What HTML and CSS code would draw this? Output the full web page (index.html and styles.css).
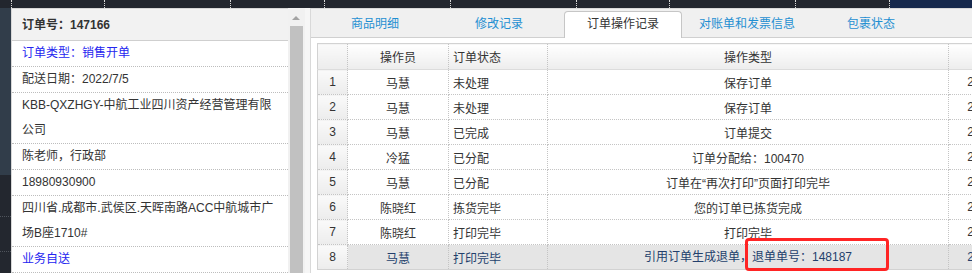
FILE: index.html
```html
<!DOCTYPE html>
<html lang="zh-CN">
<head>
    <meta charset="UTF-8">
    <meta name="viewport" content="width=device-width, initial-scale=1.0">
    <title>订单操作记录</title>
    <link rel="stylesheet" href="styles.css">
</head>
<body>
    <div class="topbar">
        <span class="seg seg-first"></span>
        <span class="seg seg-s"></span>
        <span class="seg seg-l"></span>
        <span class="seg seg-m"></span>
        <span class="seg seg-l"></span>
        <span class="seg seg-l"></span>
        <span class="seg seg-s"></span>
        <span class="seg seg-l"></span>
        <span class="seg seg-m"></span>
        <span class="seg-rest"></span>
    </div>

    <div class="main">
        <div class="nav-edge">
            <div class="nav-block"></div>
            <div class="nav-item"></div>
            <div class="nav-item short"></div>
        </div>

        <div class="order-panel">
            <div class="order-head">订单号：147166</div>
            <ul class="order-info">
                <li class="link">订单类型：销售开单</li>
                <li>配送日期：2022/7/5</li>
                <li>KBB-QXZHGY-中航工业四川资产经营管理有限公司</li>
                <li>陈老师，行政部</li>
                <li>18980930900</li>
                <li>四川省.成都市.武侯区.天晖南路ACC中航城市广场B座1710#</li>
                <li class="link">业务自送</li>
            </ul>
        </div>

        <div class="scrollbar">
            <span class="arrow"></span>
            <span class="thumb"></span>
        </div>
        <div class="splitter"></div>

        <div class="detail">
            <div class="tabs">
                <span class="tab">商品明细</span>
                <span class="tab">修改记录</span>
                <span class="tab active">订单操作记录</span>
                <span class="tab">对账单和发票信息</span>
                <span class="tab">包裹状态</span>
            </div>

            <div class="grid-wrap">
                <table class="grid">
                    <colgroup>
                        <col class="c-no">
                        <col class="c-user">
                        <col class="c-state">
                        <col class="c-type">
                        <col class="c-time">
                    </colgroup>
                    <thead>
                        <tr>
                            <th class="no"></th>
                            <th>操作员</th>
                            <th class="left">订单状态</th>
                            <th>操作类型</th>
                            <th>操作时间</th>
                        </tr>
                    </thead>
                    <tbody>
                        <tr>
                            <td class="no">1</td>
                            <td>马慧</td>
                            <td class="left">未处理</td>
                            <td>保存订单</td>
                            <td>2022-07-05 09:12:26</td>
                        </tr>
                        <tr>
                            <td class="no">2</td>
                            <td>马慧</td>
                            <td class="left">未处理</td>
                            <td>保存订单</td>
                            <td>2022-07-05 09:13:02</td>
                        </tr>
                        <tr>
                            <td class="no">3</td>
                            <td>马慧</td>
                            <td class="left">已完成</td>
                            <td>订单提交</td>
                            <td>2022-07-05 09:13:05</td>
                        </tr>
                        <tr>
                            <td class="no">4</td>
                            <td>冷猛</td>
                            <td class="left">已分配</td>
                            <td>订单分配给：100470</td>
                            <td>2022-07-05 09:40:18</td>
                        </tr>
                        <tr>
                            <td class="no">5</td>
                            <td>马慧</td>
                            <td class="left">已分配</td>
                            <td>订单在“再次打印”页面打印完毕</td>
                            <td>2022-07-05 10:02:47</td>
                        </tr>
                        <tr>
                            <td class="no">6</td>
                            <td>陈晓红</td>
                            <td class="left">拣货完毕</td>
                            <td>您的订单已拣货完成</td>
                            <td>2022-07-05 10:25:31</td>
                        </tr>
                        <tr>
                            <td class="no">7</td>
                            <td>陈晓红</td>
                            <td class="left">打印完毕</td>
                            <td>打印完毕</td>
                            <td>2022-07-05 10:26:09</td>
                        </tr>
                        <tr class="selected">
                            <td class="no">8</td>
                            <td>马慧</td>
                            <td class="left">打印完毕</td>
                            <td>引用订单生成退单，<span class="mark">退单单号：148187</span></td>
                            <td>2022-07-06 14:08:52</td>
                        </tr>
                    </tbody>
                </table>
            </div>
        </div>
    </div>
</body>
</html>
```

FILE: styles.css
```css
:root {
    --text-color: #333;
    --link-color: #2525f0;
    --tab-color: #1f8fd2;
    --line-color: #d2d2d2;
    --dot-color: #c4c4c4;
}
* {
    box-sizing: border-box;
}
body {
    margin: 0;
    width: 972px;
    height: 273px;
    overflow: hidden;
    background-color: #23272f;
    font-family: "Liberation Sans", "Noto Sans CJK SC", sans-serif;
    font-size: 12px;
    color: var(--text-color);
}

/* dark strip on top */
.topbar {
    display: flex;
    height: 8px;
    background-color: #22262e;
}
.seg {
    height: 8px;
    border-right: 1px dotted #d8d8d8;
}
.seg-first { width: 12px; }
.seg-s { width: 93px; }
.seg-m { width: 94px; }
.seg-l { width: 126px; }
.seg-rest {
    flex: 1;
    background-color: #16284c;
}

.main {
    display: flex;
    height: 265px;
}

/* left navigation edge */
.nav-edge {
    width: 11px;
    background-color: #23272f;
}
.nav-block {
    height: 167px;
    background-color: #313d4a;
}
.nav-item {
    height: 42px;
    border-bottom: 1px dotted #4f545c;
}
.nav-item.short {
    height: 35px;
}

/* order summary */
.order-panel {
    width: 277px;
    background-color: white;
    border-left: 1px solid #d8d8d8;
    border-top: 1px solid #d6d6d6;
}
.order-head {
    height: 32px;
    line-height: 33px;
    padding-left: 10px;
    background-color: #f2f2f2;
    border-bottom: 1px solid #cfcfcf;
    font-weight: bold;
}
.order-info {
    list-style: none;
    margin: 0;
    padding: 0;
}
.order-info li {
    padding: 0 10px;
    line-height: 25px;
    border-bottom: 1px dotted #bdbdbd;
}
.order-info li.link {
    color: var(--link-color);
}

.scrollbar {
    position: relative;
    width: 17px;
    background-color: #f1f1f1;
}
.arrow {
    position: absolute;
    top: 8px;
    left: 4px;
    width: 0;
    height: 0;
    border-left: 4px solid transparent;
    border-right: 4px solid transparent;
    border-bottom: 4px solid #a3a3a3;
}
.thumb {
    position: absolute;
    top: 18px;
    left: 2px;
    width: 13px;
    bottom: 0;
    background-color: #c1c1c1;
}
.splitter {
    width: 6px;
    background-color: #f6f6f6;
    border-right: 1px solid #d9d9d9;
}

/* right side: tabs + grid */
.detail {
    flex: 1;
    overflow: hidden;
    background-color: white;
}
.tabs {
    display: flex;
    gap: 6px;
    height: 30px;
    padding: 2px 0 0 5px;
    background-color: #f0f0f0;
    border-top: 1px solid #d8d8d8;
    border-bottom: 1px solid #d0d0d0;
}
.tab {
    width: 118px;
    height: 27px;
    line-height: 25px;
    text-align: center;
    color: var(--tab-color);
    border: 1px solid transparent;
    border-bottom: none;
}
.tab.active {
    color: var(--text-color);
    background-color: white;
    border-color: #c6c6c6;
    border-radius: 4px 4px 0 0;
}

.grid-wrap {
    padding: 5px 0 0 6px;
}
.grid {
    width: 780px;
    table-layout: fixed;
    border-collapse: collapse;
    border: 1px solid var(--line-color);
}
.c-no { width: 30px; }
.c-user { width: 101px; }
.c-state { width: 99px; }
.c-type { width: 401px; }
.c-time { width: 149px; }
.grid th,
.grid td {
    height: 25px;
    padding: 0 4px;
    font-weight: normal;
    text-align: center;
    white-space: nowrap;
    border: 1px dotted var(--dot-color);
}
.grid th {
    height: 26px;
    background: linear-gradient(#ffffff, #ededed);
    border-bottom: 1px solid #dcdcdc;
}
.grid .left {
    text-align: left;
}
.grid .no {
    background: linear-gradient(#fafafa, #ececec);
}
.grid tr.selected td {
    background-color: #e5e5e5;
    color: #233f6c;
}
.grid tr.selected td.no {
    background: linear-gradient(#fafafa, #ececec);
    color: var(--text-color);
}

/* red annotation box */
.mark {
    position: relative;
    display: inline-block;
    line-height: 24px;
}
.mark::after {
    content: "";
    position: absolute;
    top: -7px;
    bottom: -2px;
    left: -7px;
    right: -37px;
    border: 3px solid #ff2424;
    border-radius: 4px;
}
```
